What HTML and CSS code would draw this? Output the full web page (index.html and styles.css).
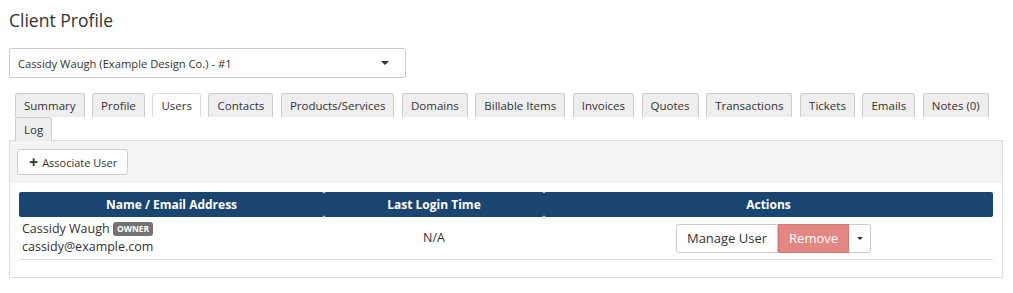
FILE: index.html
```html
<!DOCTYPE html>
<html>
<head>
<meta charset="utf-8">
<link rel="stylesheet" href="styles.css">
</head>
<body>
<div class="page">
  <h1 class="title">Client Profile</h1>
  <div class="select">
    <span class="select-text">Cassidy Waugh (Example Design Co.) - #1</span>
    <span class="caret"></span>
  </div>
  <ul class="tabs">
    <li class="tab">Summary</li>
    <li class="tab">Profile</li>
    <li class="tab active">Users</li>
    <li class="tab">Contacts</li>
    <li class="tab">Products/Services</li>
    <li class="tab">Domains</li>
    <li class="tab">Billable Items</li>
    <li class="tab">Invoices</li>
    <li class="tab">Quotes</li>
    <li class="tab">Transactions</li>
    <li class="tab">Tickets</li>
    <li class="tab">Emails</li>
    <li class="tab">Notes (0)</li>
    <li class="tab">Log</li>
  </ul>
  <div class="panel">
    <div class="toolbar">
      <button class="btn btn-assoc"><span class="plus">+</span> Associate User</button>
    </div>
    <div class="table-wrap">
      <table class="users">
        <thead>
          <tr>
            <th class="c1">Name / Email Address</th>
            <th class="c2">Last Login Time</th>
            <th class="c3">Actions</th>
          </tr>
        </thead>
        <tbody>
          <tr>
            <td class="name-cell">Cassidy Waugh <span class="badge">Owner</span><br>cassidy@example.com</td>
            <td class="center">N/A</td>
            <td class="center">
              <div class="btn-group">
                <button class="btn btn-manage">Manage User</button>
                <button class="btn btn-remove">Remove</button>
                <button class="btn btn-drop"><span class="caret small"></span></button>
              </div>
            </td>
          </tr>
        </tbody>
      </table>
    </div>
  </div>
</div>
</body>
</html>
```

FILE: styles.css
```css
* { box-sizing: border-box; }
body {
  margin: 0;
  background: #fff;
  font-family: "Open Sans", "Liberation Sans", sans-serif;
  color: #333;
}
.page {
  padding: 0 11px 0 9px;
}
.title {
  margin: 0;
  padding-top: 8px;
  font-size: 17.5px;
  font-weight: 400;
  line-height: 24px;
  color: #333;
}
.select {
  margin-top: 16px;
  width: 397px;
  height: 30px;
  border: 1px solid #ccc;
  border-radius: 2px;
  display: flex;
  align-items: center;
  justify-content: space-between;
  padding: 0 16px 0 8px;
  font-size: 11.2px;
  color: #333;
}
.caret {
  width: 0;
  height: 0;
  border-left: 4px solid transparent;
  border-right: 4px solid transparent;
  border-top: 4px solid #333;
}
.caret.small {
  border-left-width: 3px;
  border-right-width: 3px;
  border-top-width: 3px;
}
.tabs {
  list-style: none;
  margin: 15px 0 -1px 0;
  padding: 0 0 0 6px;
  display: flex;
  flex-wrap: wrap;
  column-gap: 7.6px;
}
.tab {
  height: 24px;
  line-height: 23px;
  padding: 0 8px;
  font-size: 11.5px;
  color: #333;
  background: #eee;
  border: 1px solid #ccc;
  border-bottom: none;
  border-radius: 3px 3px 0 0;
}
.tab.active {
  background: #fff;
  border-color: #ddd;
}
.panel {
  width: 994px;
  border: 1px solid #ddd;
  margin-bottom: 10px;
}
.toolbar {
  background: #f4f4f4;
  padding: 8px 7px 8px;
}
.btn {
  font-family: "Open Sans", "Liberation Sans", sans-serif;
  background: #fff;
  border: 1px solid #ccc;
  color: #333;
  cursor: pointer;
}
.btn-assoc {
  height: 26px;
  padding: 0 10px 0 11px;
  font-size: 11px;
  border-radius: 3px;
  display: flex;
  align-items: center;
}
.plus {
  font-size: 16px;
  font-weight: 700;
  margin-right: 4px;
  line-height: 1;
}
.table-wrap {
  padding: 9px 9px 17px;
}
.users {
  width: 100%;
  border-collapse: separate;
  border-spacing: 0;
}
.users th {
  background: #1a4571;
  color: #fff;
  font-size: 12px;
  font-weight: 700;
  height: 25px;
  padding: 0;
  text-align: center;
  border-radius: 2px;
}
.users th.c1 { width: 305px; }
.users th.c2 { width: 220px; }
.users td {
  font-size: 12.5px;
  color: #333;
  border-bottom: 1px solid #ddd;
  padding: 3px 3px 3px;
  line-height: 18px;
  vertical-align: middle;
}
.users td.center { text-align: center; }
.badge {
  display: inline-block;
  background: #737373;
  color: #fff;
  font-size: 8.5px;
  font-weight: 700;
  text-transform: uppercase;
  padding: 1px 4px;
  line-height: 12px;
  border-radius: 3px;
  vertical-align: 1px;
}
.btn-group {
  display: inline-flex;
  height: 29px;
  margin-left: 10px;
  vertical-align: middle;
}
.btn-group .btn {
  height: 29px;
  font-size: 13px;
  padding: 0 10px;
}
.btn-manage {
  border-radius: 3px 0 0 3px;
}
.btn-group .btn-remove {
  background: #e38785;
  border-color: #d47876;
  color: #fff;
  padding: 0 10px;
}
.btn-group .btn-drop {
  width: 22px;
  padding: 0;
  border-left: none;
  border-radius: 0 3px 3px 0;
  display: flex;
  align-items: center;
  justify-content: center;
}
```
